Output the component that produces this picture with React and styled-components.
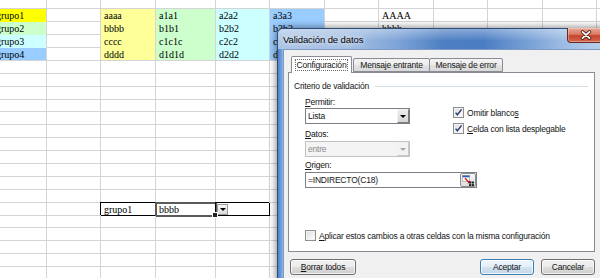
import React from 'react'
import styled, { createGlobalStyle, css } from 'styled-components'

const GlobalStyle = createGlobalStyle`
  html, body { margin: 0; padding: 0; }
  body { width: 600px; height: 278px; overflow: hidden; background: #fff; }
`

const GRID = '#d4d4d4'
const COLS = [54, 54, 55, 60, 54, 55, 54, 55, 54, 55, 54, 54]
const ROW_H = 12.9
const ROWS = 22

const YELLOW = '#ffff00'
const LIME = '#ccffcc'
const CYAN = '#ccffff'
const BLUE = '#99ccff'
const CREAM = '#ffff99'

const CELLS = {
  '1-0': { text: 'grupo1', fill: YELLOW },
  '2-0': { text: 'grupo2', fill: LIME },
  '3-0': { text: 'grupo3', fill: CYAN },
  '4-0': { text: 'grupo4', fill: BLUE, edge: true },
  '1-2': { text: 'aaaa', fill: CREAM },
  '2-2': { text: 'bbbb', fill: CREAM },
  '3-2': { text: 'cccc', fill: CREAM },
  '4-2': { text: 'dddd', fill: CREAM, edge: true },
  '1-3': { text: 'a1a1', fill: LIME },
  '2-3': { text: 'b1b1', fill: LIME },
  '3-3': { text: 'c1c1c', fill: LIME },
  '4-3': { text: 'd1d1d', fill: LIME, edge: true },
  '1-4': { text: 'a2a2', fill: CYAN },
  '2-4': { text: 'b2b2', fill: CYAN },
  '3-4': { text: 'c2c2', fill: CYAN },
  '4-4': { text: 'd2d2', fill: CYAN, edge: true },
  '1-5': { text: 'a3a3', fill: BLUE },
  '2-5': { text: 'b3b3', fill: BLUE },
  '3-5': { text: 'c3c3', fill: BLUE },
  '4-5': { text: 'd3d3', fill: BLUE, edge: true },
  '1-7': { text: 'AAAA' },
  '2-7': { text: 'bbbb' },
  '16-2': { text: 'grupo1', boxed: true },
  '16-3': { text: 'bbbb', boxed: true, active: true },
  '16-4': { boxed: true, drop: true },
}

const ui = css`
  font-family: "Liberation Sans", Arial, sans-serif;
  font-size: 8.5px;
  letter-spacing: -0.2px;
  color: #151515;
  u { text-decoration-thickness: 1px; text-underline-offset: 1px; }
`

const Screen = styled.div`
  position: relative;
  width: 600px;
  height: 278px;
  overflow: hidden;
`

const Sheet = styled.div`
  display: grid;
  grid-template-columns: ${COLS.map(w => `${w}px`).join(' ')};
  grid-auto-rows: ${ROW_H}px;
  margin-left: -7px;
  margin-top: -3.6px;
`

const Cell = styled.div`
  box-sizing: border-box;
  position: relative;
  padding: 1px 3px 0;
  border-right: 1px solid ${p => (p.$boxed ? '#000' : GRID)};
  border-bottom: 1px solid ${p => (p.$boxed ? '#000' : p.$fill && !p.$edge ? 'transparent' : GRID)};
  background: ${p => p.$fill || 'transparent'};
  box-shadow: ${p => (p.$boxed ? '-1px -1px 0 0 #000' : 'none')};
  outline: ${p => (p.$active ? '2px solid #5a5a5a' : 'none')};
  outline-offset: -1px;
  font-family: "Liberation Serif", "Times New Roman", serif;
  font-size: 10px;
  line-height: 11px;
  color: #000;
  white-space: nowrap;
`

const FillHandle = styled.span`
  position: absolute;
  right: -3px;
  bottom: -3px;
  width: 4px;
  height: 4px;
  background: #222;
  border: 1px solid #fff;
  box-sizing: content-box;
  z-index: 2;
`

const CellDrop = styled.span`
  position: absolute;
  left: 1px;
  top: 1px;
  width: 11px;
  height: 11px;
  box-sizing: border-box;
  border: 1px solid #9b9b9b;
  background: linear-gradient(#f7f7f7, #dadada);
  display: flex;
  align-items: center;
  justify-content: center;
`

const Tri = styled.span`
  width: 0;
  height: 0;
  border-left: 3px solid transparent;
  border-right: 3px solid transparent;
  border-top: 3px solid ${p => (p.$dim ? '#a8a8a8' : '#000')};
`

/* dialog window */

const Window = styled.div`
  position: absolute;
  left: 277px;
  top: 28px;
  width: 345px;
  height: 270px;
  box-sizing: border-box;
  border: 1px solid #2d4c78;
  border-radius: 6px 6px 0 0;
  background: #6d98d2;
  box-shadow: 0 0 7px 1px rgba(0, 0, 0, 0.45);
  display: flex;
  flex-direction: column;
`

const TitleBar = styled.div`
  position: relative;
  height: 20px;
  flex: none;
  display: flex;
  align-items: center;
  padding-left: 5px;
  border-radius: 5px 5px 0 0;
  background:
    linear-gradient(rgba(255, 255, 255, 0.35), rgba(255, 255, 255, 0) 60%),
    linear-gradient(90deg, #adc6e6 0px, #a3bfe3 70px, #7da3d7 120px, #4e7fc3 165px, #4a7cc2 205px, #729cd4 245px, #9dbce4 285px, #b5cdeb 320px);
`

const Title = styled.span`
  font-family: "Liberation Sans", Arial, sans-serif;
  font-size: 9.5px;
  letter-spacing: -0.1px;
  color: #000;
  text-shadow: 0 0 4px #fff, 0 0 8px rgba(255, 255, 255, 0.8);
`

const CloseBtn = styled.div`
  position: absolute;
  left: 289px;
  top: -1px;
  width: 46px;
  height: 15px;
  box-sizing: border-box;
  border: 1px solid #6b2a1f;
  border-top: none;
  border-radius: 0 0 4px 4px;
  background: linear-gradient(#eaa996 0%, #d97a63 45%, #c8422a 55%, #d16a50 100%);
  box-shadow: inset 0 0 0 1px rgba(255, 255, 255, 0.3);
  display: flex;
  align-items: center;
  padding-left: 12px;
`

const FrameBody = styled.div`
  flex: 1;
  padding: 0 5px;
  background: linear-gradient(90deg, #4d82cb 0px, #7aa5dc 4px, #9dbde6 5px);
  display: flex;
`

const Client = styled.div`
  flex: 1;
  box-sizing: border-box;
  border: 1px solid #7f9bc3;
  background: #f0f0f0;
  padding: 6px 4px 0;
  ${ui}
`

const TabRow = styled.div`
  display: flex;
  align-items: flex-end;
  padding-left: 3px;
  height: 16px;
  position: relative;
  z-index: 1;
`

const Tab = styled.div`
  box-sizing: border-box;
  width: ${p => p.$w}px;
  height: ${p => (p.$active ? 17 : 14)}px;
  margin-left: ${p => p.$gap || 0}px;
  margin-bottom: ${p => (p.$active ? -1 : 0)}px;
  border: 1px solid #898c95;
  border-bottom: ${p => (p.$active ? 'none' : '1px solid #898c95')};
  border-radius: 2px 2px 0 0;
  background: ${p => (p.$active ? '#fff' : 'linear-gradient(#f3f3f3, #ececec 50%, #e2e2e2 51%, #d9d9d9)')};
  display: flex;
  align-items: ${p => (p.$active ? 'flex-start' : 'center')};
  justify-content: center;
  padding-top: ${p => (p.$active ? 2 : 0)}px;
`

const FocusText = styled.span`
  border: 1px dotted #6a6a6a;
  padding: 0 1px;
  line-height: 10px;
`

const Panel = styled.div`
  box-sizing: border-box;
  width: 307px;
  height: 180px;
  border: 1px solid #898c95;
  background: #fff;
  display: flex;
  flex-direction: column;
  padding: 7px 6px 10px 5px;
`

const GroupHeader = styled.div`
  display: flex;
  align-items: center;
  gap: 6px;
  height: 12px;
`

const Rule = styled.span`
  flex: 1;
  height: 1px;
  background: #d5dfe5;
  box-shadow: 0 1px 0 #fff;
`

const Form = styled.div`
  display: grid;
  grid-template-columns: 148px auto;
  margin-left: 11px;
`

const Column = styled.div`
  display: flex;
  flex-direction: column;
  align-items: flex-start;
  margin-top: 4px;
`

const Label = styled.div`
  height: 12px;
  line-height: 12px;
  margin-top: ${p => p.$mt || 0}px;
`

const Combo = styled.div`
  box-sizing: border-box;
  width: ${p => p.$w}px;
  height: 16px;
  margin-top: ${p => p.$mt || 0}px;
  border: 1px solid ${p => (p.$disabled ? '#c2c2c2' : '#7a7e86')};
  background: ${p => (p.$disabled ? '#f4f4f4' : '#fff')};
  color: ${p => (p.$disabled ? '#8a8a8a' : '#151515')};
  display: flex;
  align-items: center;
  padding-left: 2px;
`

const ComboBtn = styled.span`
  margin-left: auto;
  box-sizing: border-box;
  width: 12px;
  height: 14px;
  border: 1px solid;
  border-color: ${p => (p.$dim ? '#f0f0f0 #c8c8c8 #c8c8c8 #f0f0f0' : '#f4f4f4 #7d7d7d #7d7d7d #f4f4f4')};
  background: ${p => (p.$dim ? '#f2f2f2' : 'linear-gradient(#ececec, #d6d6d6)')};
  display: flex;
  align-items: center;
  justify-content: center;
`

const RefField = styled(Combo)`
  margin-top: 1px;
`

const RefBtn = styled.span`
  margin-left: auto;
  box-sizing: border-box;
  width: 16px;
  height: 14px;
  border: 1px solid #8e8e8e;
  border-radius: 2px;
  background: linear-gradient(#f6f6f6, #dedede);
  display: flex;
  align-items: center;
  justify-content: center;
`

const Checks = styled.div`
  display: flex;
  flex-direction: column;
  gap: 5px;
  padding-top: 15px;
`

const CheckRow = styled.div`
  display: flex;
  align-items: center;
  gap: 3px;
  height: 11px;
`

const Box = styled.span`
  flex: none;
  box-sizing: border-box;
  width: 11px;
  height: 11px;
  border: 1px solid #8e8f8f;
  background: linear-gradient(135deg, #d9d9d9, #f7f7f7 70%, #ffffff);
  box-shadow: inset 0 0 0 1px #f2f2f2;
  display: flex;
  align-items: center;
  justify-content: center;
`

const ApplyRow = styled(CheckRow)`
  margin-top: auto;
  margin-left: 11px;
`

const ButtonRow = styled.div`
  display: flex;
  gap: 7px;
  width: 307px;
  box-sizing: border-box;
  padding-left: 2px;
  margin-top: 7px;
`

const Spacer = styled.span`
  flex: 1;
`

const Button = styled.div`
  box-sizing: border-box;
  width: ${p => p.$w}px;
  height: 16px;
  border: 1px solid ${p => (p.$default ? '#3c7fb1' : '#707070')};
  border-radius: 3px;
  background: ${p => (p.$default
    ? 'linear-gradient(#eef6fb 0%, #e3eef7 50%, #d2e2ef 51%, #c5d8e8 100%)'
    : 'linear-gradient(#f2f2f2 0%, #ebebeb 50%, #dddddd 51%, #cfcfcf 100%)')};
  box-shadow: inset 0 0 0 1px rgba(255, 255, 255, 0.7);
  display: flex;
  align-items: center;
  justify-content: center;
`

const CheckBox = ({ checked }) => (
  <Box>
    {checked && (
      <svg width="9" height="9" viewBox="0 0 9 9">
        <path d="M1.6 4.6 L3.4 6.8 L7.6 1.4" stroke="#2d3f70" strokeWidth="1.5" fill="none" />
      </svg>
    )}
  </Box>
)

const RefIcon = () => (
  <svg width="12" height="11" viewBox="0 0 12 11">
    <rect x="0.5" y="0.5" width="7" height="6" fill="#fff" stroke="#9a9a9a" strokeWidth="0.6" />
    <rect x="0.5" y="0.5" width="7" height="1.8" fill="#2f5cb6" />
    <path d="M3 3.2 L7.2 7.4" stroke="#e01515" strokeWidth="1.4" />
    <path d="M8.4 8.6 L5.3 8.2 L8 5.5 Z" fill="#e01515" />
    <rect x="7" y="6.5" width="5" height="4.5" fill="#222" />
    <path d="M7 8.7 H12 M9.5 6.5 V11" stroke="#ddd" strokeWidth="0.6" />
  </svg>
)

export default function App() {
  return (
    <>
      <GlobalStyle />
      <Screen>
        <Sheet>
          {Array.from({ length: ROWS }).map((_, r) =>
            COLS.map((w, c) => {
              const d = CELLS[`${r}-${c}`] || {}
              return (
                <Cell key={`${r}-${c}`} $fill={d.fill} $edge={d.edge} $boxed={d.boxed} $active={d.active}>
                  {d.text}
                  {d.active && <FillHandle />}
                  {d.drop && <CellDrop><Tri /></CellDrop>}
                </Cell>
              )
            })
          )}
        </Sheet>

        <Window>
          <TitleBar>
            <Title>Validación de datos</Title>
            <CloseBtn>
              <svg width="12" height="10" viewBox="0 0 12 10">
                <path d="M2.5 1.8 L9.5 8.2 M9.5 1.8 L2.5 8.2" stroke="#4a1a12" strokeWidth="3.4" strokeLinecap="round" />
                <path d="M2.5 1.8 L9.5 8.2 M9.5 1.8 L2.5 8.2" stroke="#fff" strokeWidth="1.8" strokeLinecap="round" />
              </svg>
            </CloseBtn>
          </TitleBar>
          <FrameBody>
            <Client>
              <TabRow>
                <Tab $active $w={61}><FocusText>Configuración</FocusText></Tab>
                <Tab $w={77} $gap={1}>Mensaje entrante</Tab>
                <Tab $w={74} $gap={-1}>Mensaje de error</Tab>
              </TabRow>
              <Panel>
                <GroupHeader>
                  <span>Criterio de validación</span>
                  <Rule />
                </GroupHeader>
                <Form>
                  <Column>
                    <Label><u>P</u>ermitir:</Label>
                    <Combo $w={105}>
                      <span>Lista</span>
                      <ComboBtn><Tri /></ComboBtn>
                    </Combo>
                    <Label $mt={4}><u>D</u>atos:</Label>
                    <Combo $w={105} $mt={1} $disabled>
                      <span>entre</span>
                      <ComboBtn $dim><Tri $dim /></ComboBtn>
                    </Combo>
                    <Label $mt={2}><u>O</u>rigen:</Label>
                    <RefField $w={172}>
                      <span>=INDIRECTO(C18)</span>
                      <RefBtn><RefIcon /></RefBtn>
                    </RefField>
                  </Column>
                  <Checks>
                    <CheckRow><CheckBox checked /><span>Omitir blanco<u>s</u></span></CheckRow>
                    <CheckRow><CheckBox checked /><span><u>C</u>elda con lista desplegable</span></CheckRow>
                  </Checks>
                </Form>
                <ApplyRow>
                  <CheckBox />
                  <span><u>A</u>plicar estos cambios a otras celdas con la misma configuración</span>
                </ApplyRow>
              </Panel>
              <ButtonRow>
                <Button $w={66}><span><u>B</u>orrar todos</span></Button>
                <Spacer />
                <Button $w={54} $default>Aceptar</Button>
                <Button $w={54}>Cancelar</Button>
              </ButtonRow>
            </Client>
          </FrameBody>
        </Window>
      </Screen>
    </>
  )
}
